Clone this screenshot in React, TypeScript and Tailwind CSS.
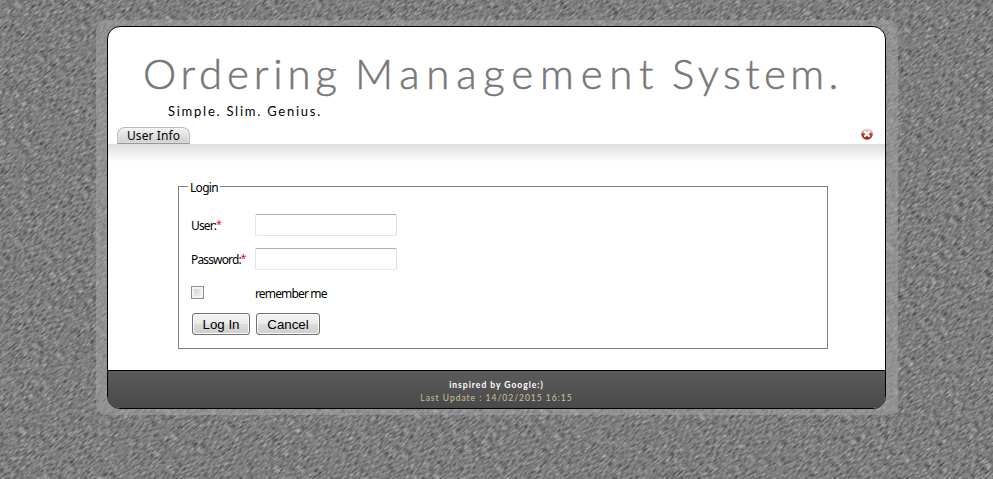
import React from "react";

function Texture() {
  return (
    <svg className="absolute inset-0 h-full w-full" aria-hidden="true">
      <defs>
        <filter id="stone" filterUnits="userSpaceOnUse" x="-700" y="-700" width="1400" height="1400" colorInterpolationFilters="sRGB">
          <feTurbulence type="fractalNoise" baseFrequency="0.17 0.6" numOctaves="3" seed="7" />
          <feColorMatrix values="0.45 0.4 0 0 0.065  0.45 0.4 0 0 0.065  0.45 0.4 0 0 0.065  0 0 0 0 1" />
        </filter>
      </defs>
      <rect width="100%" height="100%" fill="#808080" />
      <g transform="translate(496 240) rotate(-40)">
        <rect x="-700" y="-700" width="1400" height="1400" filter="url(#stone)" />
      </g>
    </svg>
  );
}

function CloseIcon() {
  return (
    <svg width="12" height="12" viewBox="0 0 12 12" className="mr-[12px] mt-[101px] shrink-0">
      <defs>
        <linearGradient id="ball" x2="0" y2="1">
          <stop offset="0" stopColor="#f8e6df" />
          <stop offset=".35" stopColor="#dfa092" />
          <stop offset=".55" stopColor="#b8382b" />
          <stop offset="1" stopColor="#8c1b15" />
        </linearGradient>
      </defs>
      <circle cx="6" cy="6" r="5.8" fill="url(#ball)" />
      <path d="M3.3 3.3 8.7 8.7M8.7 3.3 3.3 8.7" stroke="#fff" strokeWidth="2.2" />
    </svg>
  );
}

function Field({ label, type }: { label: string; type: string }) {
  return (
    <label className="flex h-[34px] items-center">
      <span className="flex w-[64px] whitespace-nowrap pt-[2px] leading-[18px] tracking-[-0.85px]">
        {label}
        <span className="-mt-[2px] text-[10px] text-red-600">*</span>
      </span>
      <input
        type={type}
        className="h-[22px] w-[142px] rounded-[2px] border border-[#e3e9ef] border-l-[#e2e3ea] border-r-[#dbdfe6] border-t-[#abadb3] bg-white px-1 outline-none"
      />
    </label>
  );
}

function Button({ children, className }: { children: React.ReactNode; className: string }) {
  return (
    <button
      type="button"
      className={`h-[22px] rounded-[3px] border border-[#707070] bg-[linear-gradient(#f2f2f2_0%,#ebebeb_48%,#dddddd_50%,#cfcfcf_100%)] text-center font-['Liberation_Sans',sans-serif] text-[13.3px] leading-[21px] tracking-normal text-black shadow-[inset_0_0_0_1px_#fafafa] ${className}`}
    >
      {children}
    </button>
  );
}

export default function App() {
  return (
    <div className="relative isolate h-[479px] w-[993px] overflow-hidden bg-[#808080] font-['Noto_Sans',sans-serif] text-black">
      <Texture />
      <div className="relative ml-[96px] mt-[20px] h-[395px] w-[802px] rounded-[10px] bg-[#a6a6a6]/50 pl-[11px] pt-[6px]">
        <main className="flex h-[383px] w-[779px] flex-col overflow-hidden rounded-[13px] border border-black bg-white">
          <header className="flex h-[117px] shrink-0 justify-between">
            <div className="flex flex-col">
              <h1 className="ml-[35px] mt-[19px] flex h-[55px] whitespace-nowrap font-['Lato',sans-serif] text-[42px] font-light leading-[54px] text-[#777] [-webkit-text-stroke:0.5px_#777]">
                <span className="w-[212px] tracking-[4.8px]">Ordering</span>
                <span className="w-[317px] tracking-[6.8px]">Management</span>
                <span className="tracking-[4.4px]">System.</span>
              </h1>
              <p className="ml-[60px] h-[20px] font-['Lato',sans-serif] text-[13px] leading-[20px] tracking-[1.75px]">
                Simple. Slim. Genius.
              </p>
              <div className="ml-[9px] mt-[6px] h-[17px] w-[73px] rounded-t-[8px] border border-[#bbb] border-b-[#999] bg-gradient-to-b from-[#f4f4f4] to-[#cecece] text-center text-[12px] leading-[15px] tracking-[0.1px] shadow-[inset_0_0_2px_#fff]">
                User Info
              </div>
            </div>
            <CloseIcon />
          </header>
          <section className="h-[226px] shrink-0 bg-[linear-gradient(#dedede,#ffffff_18px)] px-[70px] pt-[34px] text-[12px] tracking-[-0.7px]">
            <fieldset className="h-[171px] w-[650px] border border-[#808080] pl-[12px]">
              <legend className="-ml-[3px] h-[16px] px-[2px] leading-[19px]">Login</legend>
              <div className="mt-[14px]">
                <Field label="User:" type="text" />
                <Field label="Password:" type="password" />
                <label className="flex h-[34px] items-center">
                  <span className="flex w-[64px]">
                    <span className="-mt-[2px] h-[13px] w-[13px] border border-[#8e8f8f] bg-gradient-to-br from-[#cbcfd5] to-[#f6f6f6] shadow-[inset_0_0_0_2px_#f4f4f4]" />
                  </span>
                  <span className="pt-[2px] tracking-[-0.85px]">remember me</span>
                </label>
                <div className="ml-[1px] mt-[3px] flex gap-[6px]">
                  <Button className="w-[58px]">Log In</Button>
                  <Button className="w-[64px]">Cancel</Button>
                </div>
              </div>
            </fieldset>
          </section>
          <footer className="flex-1 border-t border-black bg-gradient-to-b from-[#5b5b5b] to-[#494949] pt-[8px] text-center font-['Lato',sans-serif] text-[8.5px] leading-[13px]">
            <p className="font-bold tracking-[1px] text-white">inspired by Google:)</p>
            <p className="tracking-[1px] text-[#d0c297]">Last Update : 14/02/2015 16:15</p>
          </footer>
        </main>
      </div>
    </div>
  );
}
